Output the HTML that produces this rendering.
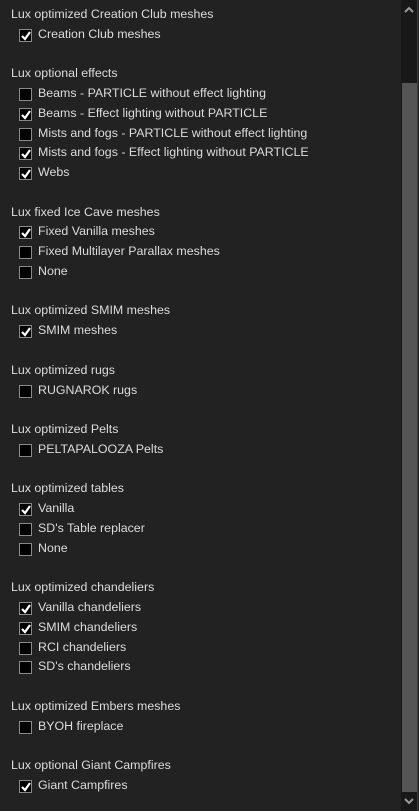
<!DOCTYPE html><html><head><style>
body{margin:0;width:419px;height:811px;background:#222;overflow:hidden;font-family:"Liberation Sans",sans-serif;font-size:12.4px;color:#dcdcdc;position:relative}
.frame{position:absolute;left:0;top:0;width:418px;height:811px;border-right:1px solid #3a3a3a;box-sizing:border-box}
.list{position:absolute;left:0;top:5px}
.r{height:19.77px;line-height:19.77px;white-space:nowrap;position:relative}
.h{padding-left:11px}
.i{padding-left:38px}
.i::before{content:"";position:absolute;left:19px;top:4px;width:11px;height:11px;border:1px solid #8a8a8a;background:#000}
.c svg{position:absolute;left:21px;top:6px}
.sb{position:absolute;left:401px;top:0;width:16px;height:811px;background:#181818}
.th{position:absolute;left:402px;top:83px;width:15px;height:709px;background:#555}
</style></head><body><div class="frame"></div>
<div class="sb"></div><div class="th"></div>
<svg style="position:absolute;left:403px;top:6px" width="12" height="8"><path d="M2 6L6 2L10 6" stroke="#999" stroke-width="2" fill="none"/></svg>
<svg style="position:absolute;left:403px;top:797px" width="12" height="8"><path d="M2 2L6 6L10 2" stroke="#999" stroke-width="2" fill="none"/></svg>
<div class="list">
<div class="r h">Lux optimized Creation Club meshes</div>
<div class="r i c">Creation Club meshes</div>
<div class="r"></div>
<div class="r h">Lux optional effects</div>
<div class="r i">Beams - PARTICLE without effect lighting</div>
<div class="r i c">Beams - Effect lighting without PARTICLE</div>
<div class="r i">Mists and fogs - PARTICLE without effect lighting</div>
<div class="r i c">Mists and fogs - Effect lighting without PARTICLE</div>
<div class="r i c">Webs</div>
<div class="r"></div>
<div class="r h">Lux fixed Ice Cave meshes</div>
<div class="r i c">Fixed Vanilla meshes</div>
<div class="r i">Fixed Multilayer Parallax meshes</div>
<div class="r i">None</div>
<div class="r"></div>
<div class="r h">Lux optimized SMIM meshes</div>
<div class="r i c">SMIM meshes</div>
<div class="r"></div>
<div class="r h">Lux optimized rugs</div>
<div class="r i">RUGNAROK rugs</div>
<div class="r"></div>
<div class="r h">Lux optimized Pelts</div>
<div class="r i">PELTAPALOOZA Pelts</div>
<div class="r"></div>
<div class="r h">Lux optimized tables</div>
<div class="r i c">Vanilla</div>
<div class="r i">SD's Table replacer</div>
<div class="r i">None</div>
<div class="r"></div>
<div class="r h">Lux optimized chandeliers</div>
<div class="r i c">Vanilla chandeliers</div>
<div class="r i c">SMIM chandeliers</div>
<div class="r i">RCI chandeliers</div>
<div class="r i">SD's chandeliers</div>
<div class="r"></div>
<div class="r h">Lux optimized Embers meshes</div>
<div class="r i">BYOH fireplace</div>
<div class="r"></div>
<div class="r h">Lux optional Giant Campfires</div>
<div class="r i c">Giant Campfires</div>
</div>
<script>
document.querySelectorAll('.c').forEach(e=>{e.insertAdjacentHTML('beforeend','<svg width="10" height="10"><path d="M1 5L4 8L9 1" stroke="#fff" stroke-width="2.2" fill="none"/></svg>')});
</script>
</body></html>
